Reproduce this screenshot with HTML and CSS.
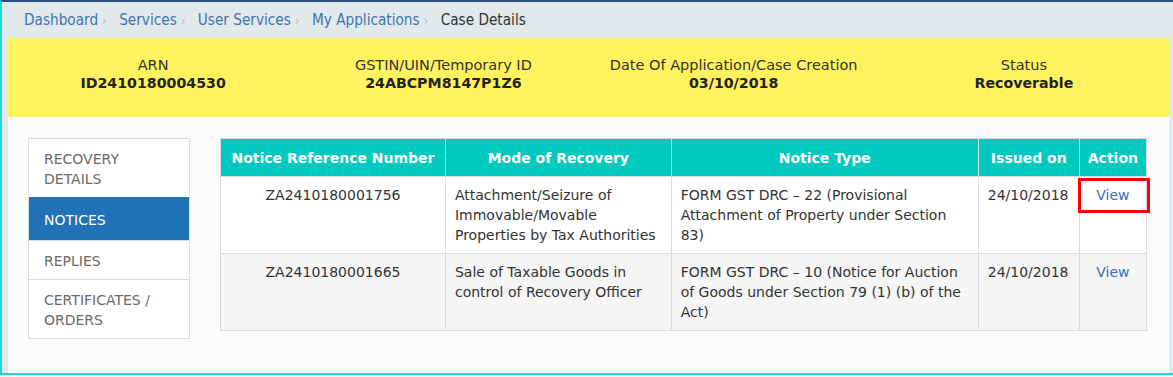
FILE: index.html
```html
<!DOCTYPE html>
<html>
	<head>
		<meta charset="UTF-8">
		<title>Case Details</title>
		<link rel="stylesheet" href="styles.css">
	</head>
	<body>
		<div class="frame">
			<div class="crumbs">
				<a href="###">Dashboard</a><span class="sep">›</span>
				<a href="###">Services</a><span class="sep">›</span>
				<a href="###">User Services</a><span class="sep">›</span>
				<a href="###">My Applications</a><span class="sep">›</span>
				<span class="here">Case Details</span>
			</div>
			<div class="info">
				<div class="info-col">
					<div class="label">ARN</div>
					<div class="value">ID2410180004530</div>
				</div>
				<div class="info-col">
					<div class="label">GSTIN/UIN/Temporary ID</div>
					<div class="value">24ABCPM8147P1Z6</div>
				</div>
				<div class="info-col">
					<div class="label">Date Of Application/Case Creation</div>
					<div class="value">03/10/2018</div>
				</div>
				<div class="info-col">
					<div class="label">Status</div>
					<div class="value">Recoverable</div>
				</div>
			</div>
			<div class="main">
				<div class="side">
					<div class="side-item">RECOVERY<br>DETAILS</div>
					<div class="side-item active">NOTICES</div>
					<div class="side-item">REPLIES</div>
					<div class="side-item">CERTIFICATES /<br>ORDERS</div>
				</div>
				<table class="notices">
					<tr>
						<th class="c1">Notice Reference Number</th>
						<th class="c2">Mode of Recovery</th>
						<th class="c3">Notice Type</th>
						<th class="c4">Issued on</th>
						<th class="c5">Action</th>
					</tr>
					<tr>
						<td class="center">ZA2410180001756</td>
						<td>Attachment/Seizure of Immovable/Movable Properties by Tax Authorities</td>
						<td>FORM GST DRC – 22 (Provisional Attachment of Property under Section 83)</td>
						<td>24/10/2018</td>
						<td class="center action"><a href="###">View</a><span class="mark"></span></td>
					</tr>
					<tr class="odd">
						<td class="center">ZA2410180001665</td>
						<td>Sale of Taxable Goods in control of Recovery Officer</td>
						<td>FORM GST DRC – 10 (Notice for Auction of Goods under Section 79 (1) (b) of the Act)</td>
						<td>24/10/2018</td>
						<td class="center"><a href="###">View</a></td>
					</tr>
				</table>
			</div>
		</div>
	</body>
</html>
```

FILE: styles.css
```css
*{
	margin: 0;
	padding: 0;
	box-sizing: border-box;
}
body{
	background-color: #fff;
	font-family: "DejaVu Sans", Verdana, sans-serif;
	font-size: 14px;
	color: #333;
}
a{
	text-decoration: none;
	color: #3d6fb6;
}
.frame{
	width: 1173px;
	height: 375px;
	border-top: 2px solid #2b4b7f;
	border-left: 2px solid #1ed6d6;
	border-bottom: 2px solid #1ed6d6;
	background-color: #e2e9eb;
	padding: 0 4px 0 6px;
	display: flex;
	flex-direction: column;
}
.crumbs{
	height: 36px;
	line-height: 36px;
	padding-left: 16px;
	font-family: "DejaVu Sans Condensed", "DejaVu Sans", sans-serif;
	font-size: 15.2px;
	white-space: nowrap;
}
.crumbs a{
	color: #3f72b5;
}
.sep{
	color: #b5babd;
	font-size: 13px;
	margin: 0 8px 0 4px;
}
.here{
	color: #333;
}
.info{
	height: 79px;
	background-color: #fef25e;
	display: grid;
	grid-template-columns: repeat(4, 1fr);
	padding-top: 18px;
	text-align: center;
	line-height: 18px;
}
.label{
	font-size: 14.5px;
	color: #333;
}
.value{
	font-size: 14.2px;
	font-weight: bold;
	color: #222;
}
.main{
	flex: 1;
	background-color: #fbfdfd;
	display: flex;
	align-items: flex-start;
	gap: 30px;
	padding: 21px 0 0 20px;
}
.side{
	width: 162px;
	border: 1px solid #dcdcdc;
	background-color: #fff;
}
.side-item{
	padding: 10px 15px 8px;
	line-height: 20px;
	color: #6a6a6a;
	border-top: 1px solid #dcdcdc;
}
.side-item:first-child{
	border-top: none;
}
.side-item.active{
	background-color: #1f72b5;
	color: #fff;
	border-top: none;
	padding: 13px 15px 10px;
}
.notices{
	width: 927px;
	border-collapse: collapse;
	border: 1px solid #dcdcdc;
	background-color: #fff;
}
.notices th{
	background-color: #00c9bf;
	color: #fff;
	font-weight: bold;
	line-height: 20px;
	padding: 9px 8px 8px;
	border: 1px solid #dcdcdc;
	border-top: none;
	text-align: center;
	white-space: nowrap;
}
.c1{ width: 225px; }
.c2{ width: 226px; }
.c3{ width: 308px; }
.c4{ width: 101px; }
.c5{ width: 67px; }
.notices td{
	line-height: 20px;
	padding: 8px 9px;
	border: 1px solid #dcdcdc;
	vertical-align: top;
	color: #333;
}
.notices td.center{
	text-align: center;
}
.notices tr.odd td{
	background-color: #f4f5f4;
}
/*红框标注*/
.action{
	position: relative;
}
.mark{
	position: absolute;
	left: -2px;
	top: 1px;
	width: 72px;
	height: 35px;
	border: 3px solid #f00;
}
```
